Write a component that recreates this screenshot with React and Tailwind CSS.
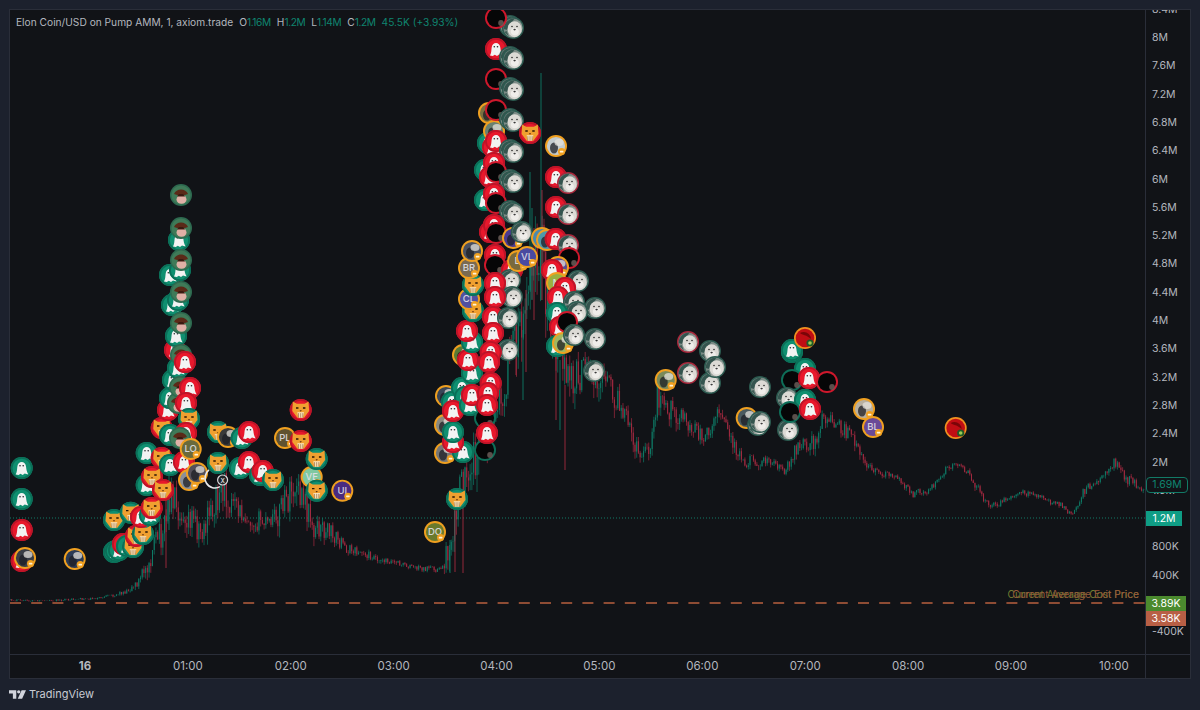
import React from "react";

const RED = "#e8182c";
let seed = 17;
const rnd = () => {
  seed = (seed * 16807) % 2147483647;
  return seed / 2147483647;
};

const path = [
  [9,600,1.5],[40,601,1.5],[60,600,1.5],[100,598,2],[118,594,3],[130,589,6],[140,580,10],[147,563,18],[155,545,24],[165,525,28],[172,490,32],[180,510,26],[190,515,24],[203,532,28],[212,510,26],[222,485,32],[235,510,24],[250,518,18],[270,525,18],[283,505,28],[295,490,32],[305,505,26],[315,530,20],[330,530,16],[345,548,9],[360,553,7],[380,558,7],[400,564,5],[420,568,5],[440,570,4],[447,555,22],[455,515,35],[466,470,32],[478,450,40],[490,420,40],[500,400,45],[510,355,45],[520,320,55],[530,285,60],[540,240,70],[550,320,55],[560,350,40],[570,385,38],[585,370,30],[597,378,30],[610,388,26],[625,420,24],[640,458,15],[650,452,18],[657,395,20],[668,410,18],[680,415,20],[692,430,16],[705,437,13],[718,410,18],[730,438,16],[745,462,10],[770,460,9],[785,470,9],[797,448,13],[815,442,18],[823,418,12],[838,425,11],[855,440,13],[870,470,9],[895,475,5],[913,494,7],[930,490,5],[945,470,6],[960,462,5],[975,484,8],[990,508,6],[1005,500,5],[1020,491,5],[1040,498,5],[1060,505,5],[1071,515,4],[1085,490,8],[1100,479,7],[1115,462,8],[1125,478,9],[1144,490,6],
];
const at = (x) => {
  for (let i = 1; i < path.length; i++) {
    if (x <= path[i][0]) {
      const a = path[i - 1], b = path[i];
      const t = (x - a[0]) / (b[0] - a[0]);
      return [a[1] + (b[1] - a[1]) * t, a[2] + (b[2] - a[2]) * t];
    }
  }
  return [490, 4];
};
const candles = [];
let prev = 600;
for (let x = 10; x < 1145; x += 1.717) {
  const [c, w] = at(x);
  const close = c + (rnd() - 0.5) * w * 1.15;
  const open = prev;
  const hi = Math.min(open, close) - rnd() * w * 0.3;
  const lo = Math.max(open, close) + rnd() * w * 0.45;
  candles.push({ x, open, close, hi, lo, up: close < open });
  prev = close;
}
const spikes = [
  ["g", 541, 73, 300], ["g", 530, 172, 290], ["g", 532, 208, 300], ["r", 534, 228, 320], ["r", 542, 190, 300], ["r", 526, 290, 372],
  ["g", 523, 330, 400], ["r", 516, 320, 375], ["g", 550, 270, 330], ["r", 556, 330, 420], ["g", 560, 360, 430], ["r", 565, 385, 470],
  ["r", 463, 500, 573], ["g", 450, 540, 573], ["r", 455, 490, 572], ["g", 169, 470, 530], ["r", 166, 490, 568],
];

const Ghost = () => (
  <g>
    <path d="M-6 6.6 C-4.6 3.5 -4.6 1 -4.4 -1 C-4 -7.6 4 -7.6 4.4 -1 C4.6 1 4.8 3.5 6.6 6.4 L3 5.6 L1 7 L-1.2 5.8 L-3.2 7 Z" fill="#f2f3f3" />
    <circle cx="-1.7" cy="-2.2" r="0.8" fill="#26282c" />
    <circle cx="1.5" cy="-2.2" r="0.8" fill="#26282c" />
  </g>
);
const Cat = () => (
  <g transform="scale(1.12)">
    <path d="M-7 -7.5 L-3.5 -5.5 H3.5 L7 -7.5 L7.5 1 L3 7 H-3 L-7.5 1 Z" fill="#f0a030" />
    <path d="M-4.2 -2.5 h2.2 v1.3 h-2.2 Z M2 -2.5 h2.2 v1.3 h-2.2 Z" fill="#2a1505" />
    <path d="M-3 2 H3 L2 7 H-2 Z" fill="#fbe6c0" />
    <path d="M-1.9 2.8 v4 M0 2.8 v4 M1.9 2.8 v4" stroke="#7a4a18" strokeWidth="0.5" />
    <path d="M-1 0.3 H1 L0 1.6 Z" fill="#5a2a10" />
  </g>
);

function Marker({ m }) {
  const [k, x, y, label, color] = m;
  const r = 11;
  let body = null;
  if (k === "gg" || k === "cg") {
    body = (
      <g>
        <circle r={r} fill="#0f8f70" />
        <circle r={r - 0.9} fill="none" stroke="#0b6f58" strokeWidth="1.8" />
        {k === "gg" ? <Ghost /> : <Cat />}
      </g>
    );
  } else if (k === "gr" || k === "cr") {
    body = (
      <g>
        <circle r={r} fill={RED} />
        <circle r={r - 0.9} fill="none" stroke="#bd1428" strokeWidth="1.8" />
        {k === "gr" ? <Ghost /> : <Cat />}
      </g>
    );
  } else if (k === "dg" || k === "dr") {
    body = (
      <g>
        <circle r={r} fill={k === "dg" ? "#2c5a50" : "#a8283c"} />
        <circle r={r - 1.4} fill="url(#dogbg)" />
        <path d="M-9.4 1 C-9 -5 -4 -9.6 1.5 -9.4 L-1.5 -5 L-5 -3 L-5.5 2 Z" fill="#34544e" />
        <path d="M-9 4 L-6.4 3 L-4 8.4 Z" fill="#3f5d57" />
        <ellipse cx="1.6" cy="1.2" rx="7" ry="8" fill="#dcdad5" />
        <ellipse cx="1.8" cy="3.6" rx="4" ry="3.6" fill="#efedea" />
        <circle cx="-1" cy="-1.5" r="0.8" fill="#2a2a2a" />
        <circle cx="4" cy="-1.5" r="0.8" fill="#2a2a2a" />
        <ellipse cx="1.6" cy="1.6" rx="1.2" ry="0.8" fill="#3a3a3a" />
      </g>
    );
  } else if (k === "kr" || k === "kg") {
    body = (
      <g>
        <circle r={r} fill={k === "kr" ? "#cf182c" : "#0e6e58"} />
        <circle r={r - 1.9} fill="#060607" />
        <ellipse cx="5" cy="5" rx="2.8" ry="3" fill="#6f615c" opacity="0.8" />
      </g>
    );
  } else if (k === "ph") {
    body = (
      <g>
        <circle r={r} fill="#2e6a50" />
        <circle r={r - 1.5} fill="#3f7a58" />
        <path d="M-7 -1 C-5 -7 5 -7 7 -1 L4 0 H-4 Z" fill="#5a2a18" />
        <ellipse cx="0.5" cy="4.4" rx="5" ry="4.4" fill="#e0b0a6" />
        <path d="M-4 1.5 L4 1.5 L2 -1 L-2 -1 Z" fill="#3a1a10" />
      </g>
    );
  } else if (k === "t") {
    body = (
      <g>
        <circle r={r} fill="#f0a020" />
        <circle r={r - 1.9} fill={color || "#5b6066"} />
        {label ? (
          <text y="3.4" textAnchor="middle" fontSize="9.5" fontFamily="Inter, sans-serif" fontWeight="500" fill="#e2e2ea" opacity="0.9">{label}</text>
        ) : (
          <g>
            <ellipse cx="-2" cy="2" rx="4" ry="5.5" fill="#1d1f26" opacity="0.75" />
            <ellipse cx="3" cy="-3.5" rx="4.5" ry="3.5" fill="#e4e2dc" opacity="0.75" />
          </g>
        )}
        <circle cx="5.6" cy="5.6" r="3.6" fill="#f0a020" />
        <rect x="3.8" y="4.7" width="3.6" height="1.8" rx="0.6" fill="#fff3d8" />
      </g>
    );
  } else if (k === "tr") {
    body = (
      <g>
        <circle r={r} fill="#f09020" />
        <circle r={r - 1.7} fill="#c00d14" />
        <path d="M-5 -5 C0 -8 6 -4 6 1 C2 -3 -3 -3 -5 -5 Z" fill="#7a0508" />
        <circle cx="5" cy="5" r="3.6" fill="#1f5a28" />
        <circle cx="5" cy="5" r="1.8" fill="#9ccc50" />
      </g>
    );
  } else if (k === "w") {
    body = (
      <g>
        <circle r={r - 1} fill="none" stroke="#e8e8ea" strokeWidth="1.6" strokeDasharray="30 36" transform="rotate(60)" />
        <circle cx="7.6" cy="2" r="5" fill="#222428" stroke="#d9d9dc" strokeWidth="1.2" />
        <text x="7.6" y="5" textAnchor="middle" fontSize="8" fontFamily="Inter, sans-serif" fill="#e8e8ea">x</text>
      </g>
    );
  }
  return <g transform={`translate(${x} ${y})`}>{body}</g>;
}

const T = (x, y, label, color) => ["t", x, y, label, color];
const D = (y) => [["dg", 510, y - 2], ["dg", 513, y]];
const markers = [
  ["gg",21.7,468],["gg",21.7,499],["gr",21.7,530],["gr",21.7,561],T(25,558,"","#3a3e46"),T(74.7,559,"","#2a3a55"),
  ["gg",114,552],["gg",116,551],["gg",119,550],["gr",123,544],["gg",127,546],["cg",133,547],["cr",136,536],["cg",143,534],
  ["cg",114,520],["cg",130.7,512.7],["gr",141,517],["gg",150,515],["cr",151.7,508],
  ["gg",146.7,485],["gg",146.7,453],["cr",161.7,428],["cr",152,477],["cr",163,490],["cr",161.7,458],
  ["gg",170,465],["gr",168,410],["gg",170,435],["gg",170,398],["gg",173,380],["gr",175,350],
  ["gg",178,368],["gg",172,305],["gg",170,275],["gg",176,336],
  ["gg",179,240],["ph",181,195],["gg",180,270],["ph",181,228],["gg",178,300],["ph",181,260],["ph",181,292],["ph",181,323],["ph",181,355],
  ["ph",178,403],["gr",185,362],["ph",180,387],["gr",190,388],["gr",186,403],["cg",189,419],["gr",186,433],
  ["ph",180,438],["gr",184,462],
  T(190.7,449,"LO","#6a6a3c"),T(189,480,"","#8a8f9a"),T(197,473,"","#54505a"),
  ["w",215,478],
  ["cg",218,432],T(228,437,"","#3a3a3a"),["gg",241.7,438],["gr",249,432],
  ["cg",218,463],["gg",240,468],["gr",249,462],["gg",260,475],["gr",262.7,471],["cg",273,480],
  T(285,438,"PL","#5f5230"),["cr",300.7,441],["cr",300.7,410],
  T(311.7,477,"VE","#7fc8a0"),["cg",316.7,459],["cg",316.7,490.7],T(342.3,490.7,"UI","#4a2a80"),
  T(435,532,"DO","#6a7a2c"),["cg",457,499],T(445,453,"","#777"),["gg",463,452],["kg",485,450],
  ["gr",453,442],T(445,425,"","#8a8a80"),["gg",453,432],["kg",485,418],["gr",487,433],
  T(446,396,"","#3a4658"),["gg",452,402],["gg",462,388],["gg",465,397],["gr",453,411],["gg",472,373],["gg",470,405],["gr",472,395],
  T(463,355,"","#5a7a34"),["gr",468,360],["gg",472,342],["gr",467,331],
  ["cg",473,311],T(469,299,"CL","#5050a0"),["cg",473,285],T(469,268,"BR","#7a6a52"),T(472,251,"","#4a5060"),
  ["gg",485,200],["gg",485,170],T(489,113,"","#7a7040"),["gg",488,143],
  ["gr",490,177],["gr",493,147],["gr",490,232],
  T(494,131,"","#6a8070"),
  ...D(28),["kr",496,18],["gr",496,49],...D(59),["kr",496,79],...D(90),["kr",496,110],...D(121),
  ["gr",496,141],...D(152),["gr",494,163],["kr",496,172],...D(182),["gr",494,194],["kr",496,203],...D(213),
  ["gr",494,225],["kr",496,233],T(513,238,"","#4a3a90"),["dg",521.7,232],
  ["gr",495,255],["kr",495,265],["gr",512,270],["dg",510,280],T(518,261,"D","#7a6a3c"),T(527,257,"VL","#4a4aa0"),
  ["gr",495,283],["dg",512,297],["gr",495,297],["gr",493,317],["dg",508,318],["gr",493,333],["dg",508,350],["gr",490.7,352],["gr",489,362],
  ["gr",490.7,383],["gr",488,393],["gr",487,405],
  ["cr",530,133],T(556,146,"","#c4ccd0"),
  ["gr",556,177],["dr",568,183],["gr",556,207],["dr",568,214],
  T(542,238,"","#4a8ab0"),T(547,240,"","#5098a8"),["gr",555.7,239],["dr",568,245],["kr",569,258],
  T(558,267,"","#5a4a90"),["gr",552,270],T(557,283,"M","#9ab040"),["dg",578,281],["gr",565,288],["gg",558,300],["gr",558,297],
  ["dg",574,302],["dg",595,308],["dg",577,312],["gg",557,313],["gr",560,327],["kr",567,322],["gg",557,346],T(563,343,"","#a0b860"),["dg",574,335],["dg",595,339],["dg",594,371],
  T(665.7,380,"","#7a8a5a"),["dr",688,342],["dr",688,373],["dg",710,351],["dg",710,383],["dg",715,367],["dg",760,387],
  T(746.7,418,"","#4a5a60"),["dg",758,425],["dg",760,422],
  ["gg",792,352],["gg",792,350],["tr",805,338],["dg",788,430],["gg",805,369],["kg",792,380],["gr",809,378],["kr",827,382],
  ["dg",787,398],["gg",805,400],["kg",790,412],["gr",810,409],
  T(864,409,"","#b8b0a0"),T(873,427,"BL","#6a4a98"),["tr",955.7,428],
];

const prices = ["8.4M","8M","7.6M","7.2M","6.8M","6.4M","6M","5.6M","5.2M","4.8M","4.4M","4M","3.6M","3.2M","2.8M","2.4M","2M","1.6M","","800K","400K","","-400K"];
const times = ["16","01:00","02:00","03:00","04:00","05:00","06:00","07:00","08:00","09:00","10:00"];

export default function App() {
  return (
    <div className="w-[1200px] h-[710px] bg-[#1c212d] flex flex-col pt-[9px] pl-[9px] pr-[9px] overflow-hidden font-['Inter',sans-serif]">
      <div className="h-[670px] flex flex-col border border-[#2a2e39] bg-[#111317]">
        <div className="flex h-[644px]">
          <div className="relative w-[1135px] h-full overflow-hidden">
            <svg className="absolute inset-0" width="1135" height="644" viewBox="10 10 1135 644">
              <line x1="10" x2="1145" y1="518" y2="518" stroke="#127a66" strokeWidth="1" strokeDasharray="1 2" />
              {candles.map((c, i) => (
                <g key={i} stroke={c.up ? "#0e7a66" : "#a32a40"}>
                  <line x1={c.x} x2={c.x} y1={c.hi} y2={c.lo} strokeWidth="0.7" />
                  <line x1={c.x} x2={c.x} y1={c.open} y2={c.close} strokeWidth="1" />
                </g>
              ))}
              {spikes.map(([k, x, a, b], i) => (
                <line key={i} x1={x} x2={x} y1={a} y2={b} stroke={k === "g" ? "#0e7a66" : "#a32a40"} strokeWidth="0.9" />
              ))}
              <line x1="10" x2="1145" y1="603" y2="603" stroke="#b8603f" strokeWidth="1.3" strokeDasharray="11 10.2" />
              <defs>
                <linearGradient id="dogbg" x1="0" y1="0" x2="1" y2="1">
                  <stop offset="0" stopColor="#566f69" />
                  <stop offset="1" stopColor="#bcbcb8" />
                </linearGradient>
              </defs>
              {markers.map((m, i) => (
                <Marker key={i} m={m} />
              ))}
            </svg>
            <div className="absolute left-[6px] top-[5px] flex items-center text-[10.2px] leading-[14px] text-[#b4b7bf] whitespace-nowrap">
              <span>Elon Coin/USD on Pump AMM, 1, axiom.trade</span>
              <span className="ml-[6px]">O</span><span className="text-[#0f8570] tracking-[-0.4px]">1.16M</span>
              <span className="ml-[6px]">H</span><span className="text-[#0f8570] tracking-[-0.4px]">1.2M</span>
              <span className="ml-[6px]">L</span><span className="text-[#0f8570] tracking-[-0.4px]">1.14M</span>
              <span className="ml-[6px]">C</span><span className="text-[#0f8570] tracking-[-0.4px]">1.2M</span>
              <span className="ml-[6px] text-[#0f8570]">45.5K (+3.93%)</span>
            </div>
            <div className="absolute right-[6px] top-[577px] text-[10.2px] leading-[14px] text-[#6f7a30] whitespace-nowrap">Current Average Cost Price</div>
            <div className="absolute right-[6px] top-[577px] text-[10.2px] leading-[14px] text-[#96583a] whitespace-nowrap">Current Average Exit Price</div>
          </div>
          <div className="relative flex-1 border-l border-[#2a2e39] overflow-hidden">
            <div className="flex flex-col -mt-[14.5px] pl-[6px]">
              {prices.map((p, i) => (
                <div key={i} className="h-[28.3px] shrink-0 flex items-center text-[10.5px] text-[#b4b7bf]">{p}</div>
              ))}
            </div>
            <div className="absolute left-0 top-[467px] w-[42px] h-[16px] flex items-center justify-center border border-[#127a66] rounded-sm bg-[#111317] text-[10.5px] text-[#0f8570]">1.69M</div>
            <div className="absolute left-0 top-[501px] w-[36px] h-[15px] flex items-center justify-center bg-[#0f9d85] text-[10.5px] text-white">1.2M</div>
            <div className="absolute left-0 top-[586px] w-[40px] h-[15px] flex items-center justify-center bg-[#4b8a2e] text-[10.5px] text-white">3.89K</div>
            <div className="absolute left-0 top-[601px] w-[40px] h-[15px] flex items-center justify-center bg-[#b85f45] text-[10.5px] text-white">3.58K</div>
          </div>
        </div>
        <div className="flex-1 flex border-t border-[#2a2e39]">
          <div className="w-[1135px] flex pl-[23.5px]">
            {times.map((t) => (
              <div key={t} className={`w-[102.9px] shrink-0 flex items-center justify-center text-[11.5px] text-[#b4b7bf] ${t === "16" ? "font-bold" : ""}`}>{t}</div>
            ))}
          </div>
          <div className="flex-1 border-l border-[#2a2e39]" />
        </div>
      </div>
      <div className="flex-1 flex items-center gap-[3px]">
        <svg width="17" height="9" viewBox="0 0 35 18">
          <path d="M0 0H15V18H8V7H0Z M26 0H35L27 18H18Z" fill="#d1d4dc" />
          <circle cx="20" cy="3.5" r="3.5" fill="#d1d4dc" />
        </svg>
        <span className="text-[11px] text-[#c8cbd3]">TradingView</span>
      </div>
    </div>
  );
}
